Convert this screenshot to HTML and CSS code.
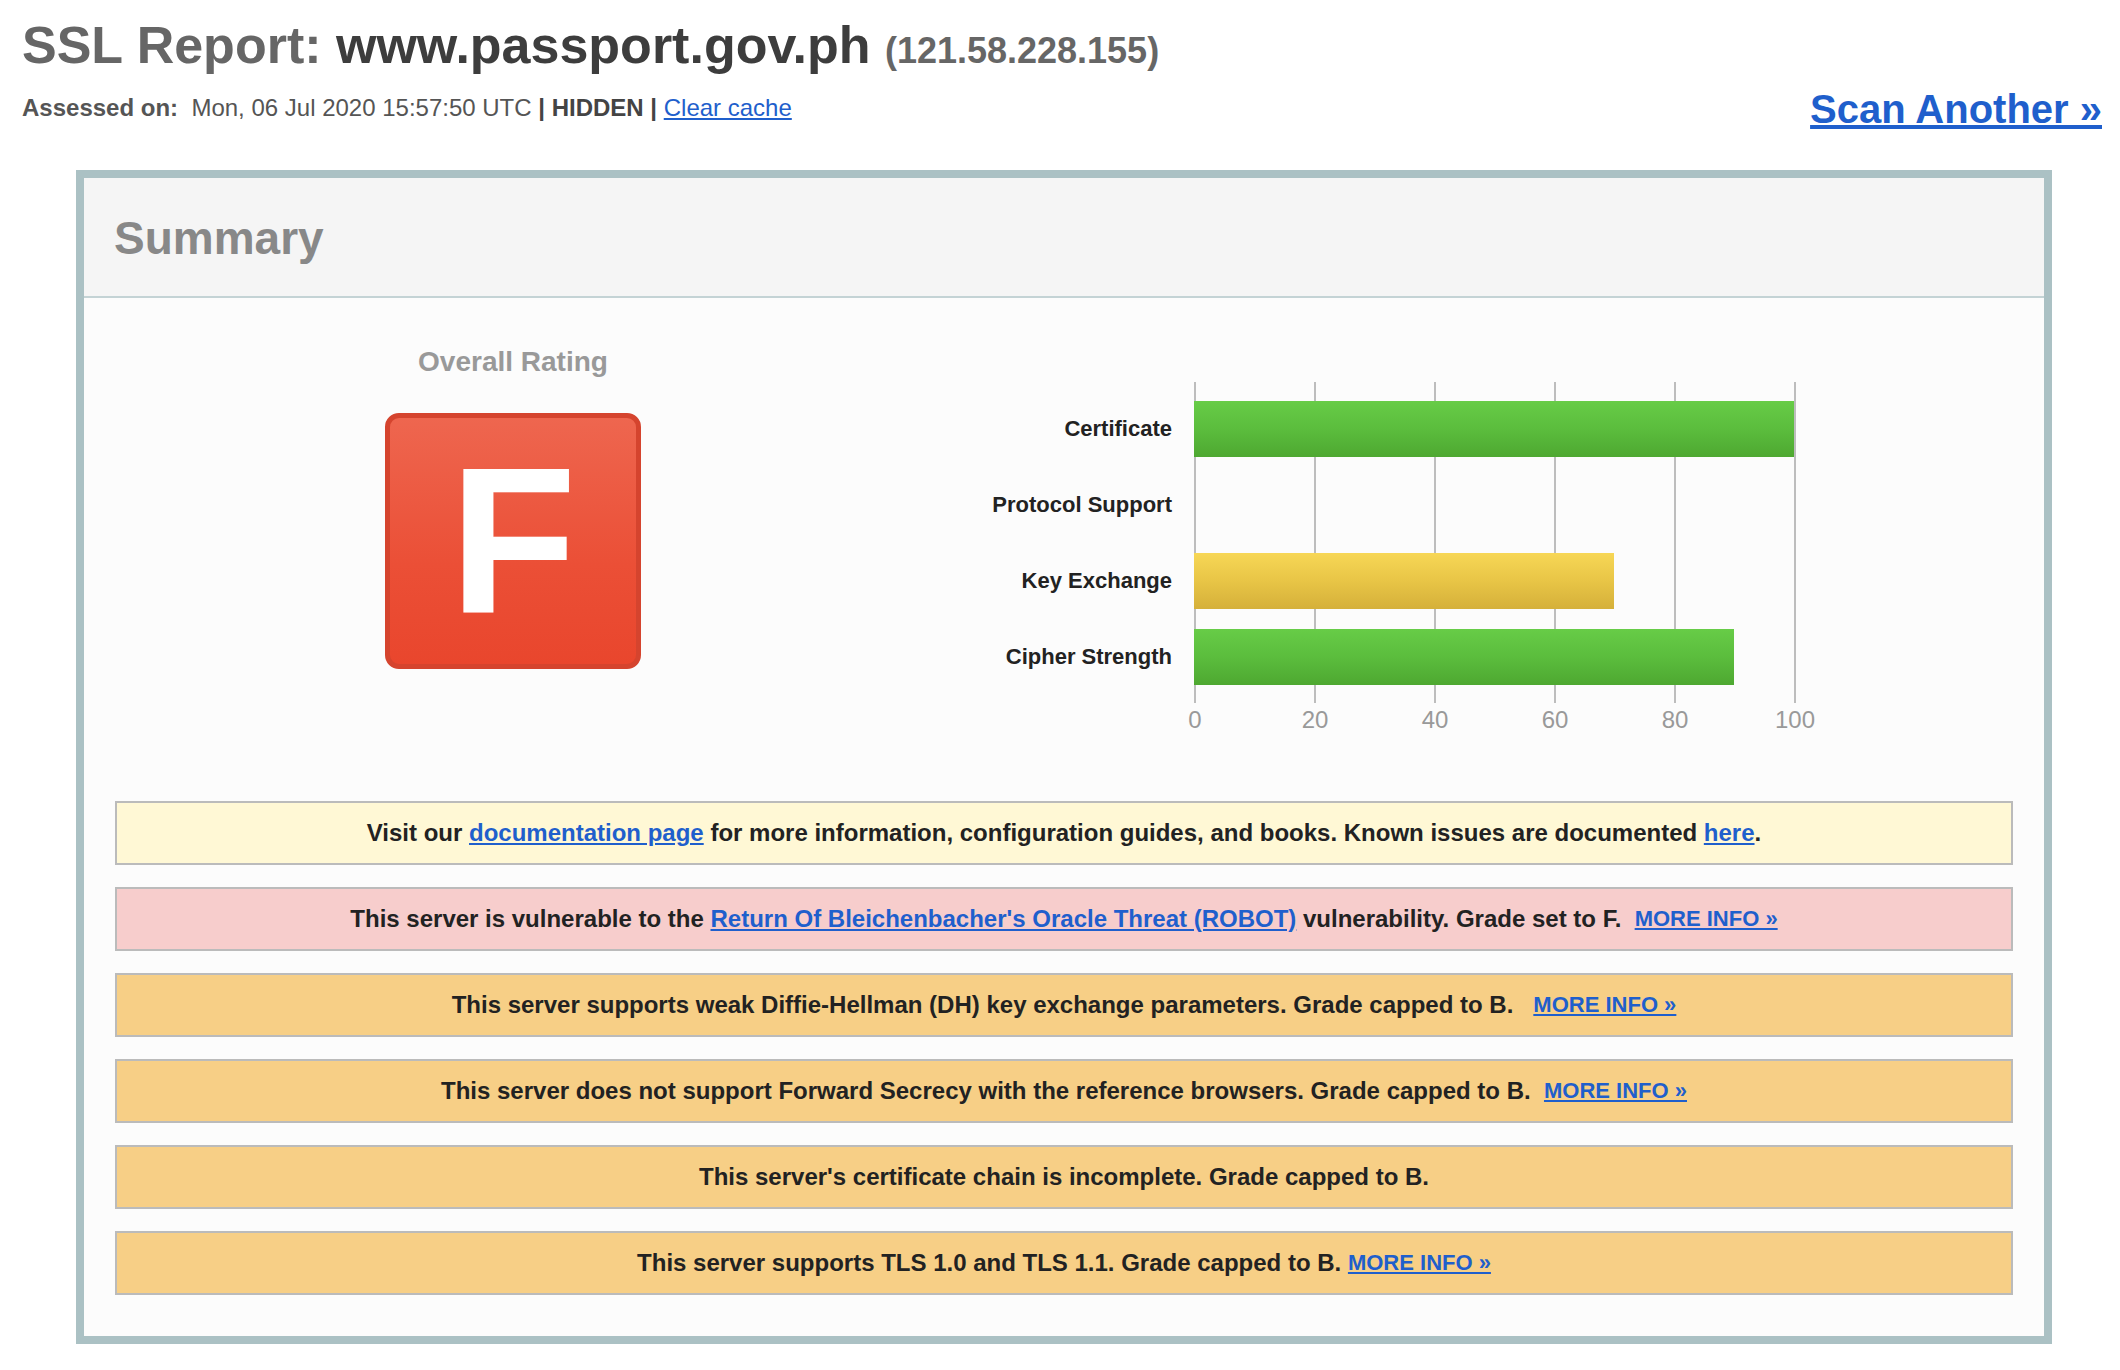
FILE: index.html
```html
<!DOCTYPE html>
<html lang="en">
<head>
<meta charset="utf-8">
<title>SSL Report: www.passport.gov.ph</title>
<link rel="stylesheet" href="styles.css">
</head>
<body>
<div class="page">
  <h1 class="report-title"><span class="title-label">SSL Report:</span> <span class="title-host">www.passport.gov.ph</span> <span class="title-ip">(121.58.228.155)</span></h1>
  <div class="meta-row">
    <div class="meta"><b class="meta-key">Assessed on:</b>&nbsp; Mon, 06 Jul 2020 15:57:50 UTC <b class="meta-strong">| HIDDEN |</b> <a href="#" class="link">Clear cache</a></div>
    <a href="#" class="scan-another">Scan Another &raquo;</a>
  </div>

  <div class="summary">
    <div class="summary-head"><h2 class="summary-title">Summary</h2></div>
    <div class="summary-body">
      <div class="top-row">
        <div class="rating-col">
          <div class="rating-label">Overall Rating</div>
          <div class="grade"><span class="grade-letter">F</span></div>
        </div>
        <div class="chart">
          <div class="chart-main">
            <div class="chart-labels">
              <div class="chart-label">Certificate</div>
              <div class="chart-label">Protocol Support</div>
              <div class="chart-label">Key Exchange</div>
              <div class="chart-label">Cipher Strength</div>
            </div>
            <div class="plot">
              <div class="track"><div class="bar bar-green" style="width:600px"></div></div>
              <div class="track"></div>
              <div class="track"><div class="bar bar-yellow" style="width:420px"></div></div>
              <div class="track"><div class="bar bar-green" style="width:540px"></div></div>
            </div>
          </div>
          <div class="axis">
            <span class="tick">0</span><span class="tick">20</span><span class="tick">40</span><span class="tick">60</span><span class="tick">80</span><span class="tick">100</span>
          </div>
        </div>
      </div>

      <div class="alerts">
        <div class="alert alert-info">Visit our <a href="#" class="link">documentation page</a> for more information, configuration guides, and books. Known issues are documented <a href="#" class="link">here</a>.</div>
        <div class="alert alert-error">This server is vulnerable to the <a href="#" class="link">Return Of Bleichenbacher's Oracle Threat (ROBOT)</a> vulnerability. Grade set to F.&nbsp; <a href="#" class="more">MORE INFO &raquo;</a></div>
        <div class="alert alert-warn">This server supports weak Diffie-Hellman (DH) key exchange parameters. Grade capped to B.&nbsp;&nbsp; <a href="#" class="more">MORE INFO &raquo;</a></div>
        <div class="alert alert-warn">This server does not support Forward Secrecy with the reference browsers. Grade capped to B.&nbsp; <a href="#" class="more">MORE INFO &raquo;</a></div>
        <div class="alert alert-warn">This server's certificate chain is incomplete. Grade capped to B.</div>
        <div class="alert alert-warn">This server supports TLS 1.0 and TLS 1.1. Grade capped to B. <a href="#" class="more">MORE INFO &raquo;</a></div>
      </div>
    </div>
  </div>
</div>
</body>
</html>
```

FILE: styles.css
```css
html, body {
  margin: 0;
  padding: 0;
  background: #ffffff;
}

body {
  font-family: "Liberation Sans", Arial, sans-serif;
  color: #222;
}

.page {
  padding: 15px 18px 0 22px;
}

.report-title {
  margin: 0;
  font-size: 52px;
  line-height: 60px;
  font-weight: bold;
  white-space: nowrap;
}

.title-label {
  color: #666;
}

.title-host {
  color: #3d3d3d;
}

.title-ip {
  font-size: 36px;
  line-height: 1;
  color: #666;
}

.meta-row {
  display: flex;
  justify-content: space-between;
  align-items: flex-start;
}

.meta {
  margin-top: 19px;
  font-size: 24px;
  line-height: 28px;
  color: #555;
}

.meta-key {
  color: #555;
}

.meta-strong {
  color: #444;
}

.link {
  color: #1f5fcc;
  text-decoration: underline;
}

.scan-another {
  margin-top: 11px;
  font-size: 40px;
  line-height: 46px;
  font-weight: bold;
  color: #1f5fcc;
  text-decoration: underline;
}

.summary {
  margin-top: 38px;
  margin-left: 54px;
  width: 1976px;
  box-sizing: border-box;
  border: 8px solid #abc1c4;
  background: #fcfcfc;
}

.summary-head {
  height: 120px;
  box-sizing: border-box;
  padding: 37px 30px 0;
  background: #f5f5f5;
  border-bottom: 2px solid #c4d3d5;
}

.summary-title {
  margin: 0;
  font-size: 46px;
  line-height: 46px;
  font-weight: bold;
  color: #888;
}

.summary-body {
  padding: 0 31px 41px;
}

.top-row {
  display: flex;
  align-items: flex-start;
}

.rating-col {
  width: 796px;
  padding-top: 48px;
  display: flex;
  flex-direction: column;
  align-items: center;
}

.rating-label {
  font-size: 28px;
  line-height: 32px;
  font-weight: bold;
  color: #999;
}

.grade {
  margin-top: 35px;
  width: 256px;
  height: 256px;
  box-sizing: border-box;
  border: 5px solid #d5442e;
  border-radius: 14px;
  background: linear-gradient(to bottom, #ee664f 0%, #eb4f36 60%, #e9462d 100%);
  display: flex;
  align-items: center;
  justify-content: center;
}

.grade-letter {
  font-size: 208px;
  line-height: 208px;
  font-weight: bold;
  color: #ffffff;
}

.chart {
  padding-top: 84px;
}

.chart-main {
  display: flex;
  column-gap: 22px;
}

.chart-labels {
  width: 261px;
  padding: 19px 0 18px;
  display: flex;
  flex-direction: column;
  row-gap: 20px;
}

.chart-label {
  height: 56px;
  display: flex;
  align-items: center;
  justify-content: flex-end;
  font-size: 22px;
  font-weight: bold;
  color: #222;
  white-space: nowrap;
}

.plot {
  width: 602px;
  padding: 19px 0 18px;
  display: flex;
  flex-direction: column;
  row-gap: 20px;
  background: repeating-linear-gradient(to right, #bdbdbd 0, #bdbdbd 2px, transparent 2px, transparent 120px);
}

.track {
  height: 56px;
}

.bar {
  height: 56px;
}

.bar-green {
  background: linear-gradient(to bottom, #67cc47 0%, #5bbd3d 50%, #4ea831 100%);
}

.bar-yellow {
  background: linear-gradient(to bottom, #f7d756 0%, #e8c546 50%, #d5b03a 100%);
}

.axis {
  margin-top: 3px;
  margin-left: 224px;
  display: flex;
}

.tick {
  width: 120px;
  text-align: center;
  font-size: 24px;
  line-height: 28px;
  color: #999;
}

.alerts {
  margin-top: 67px;
  display: flex;
  flex-direction: column;
  row-gap: 22px;
}

.alert {
  height: 64px;
  box-sizing: border-box;
  border: 2px solid #bbbbbb;
  display: flex;
  align-items: center;
  justify-content: center;
  font-size: 24px;
  font-weight: bold;
  color: #222;
  white-space: pre-wrap;
}

.alert-info {
  background: #fff8d5;
}

.alert-error {
  background: #f7cdcc;
}

.alert-warn {
  background: #f7cf86;
}

.more {
  font-size: 22px;
  font-weight: bold;
  color: #1f5fcc;
  text-decoration: underline;
}
```
